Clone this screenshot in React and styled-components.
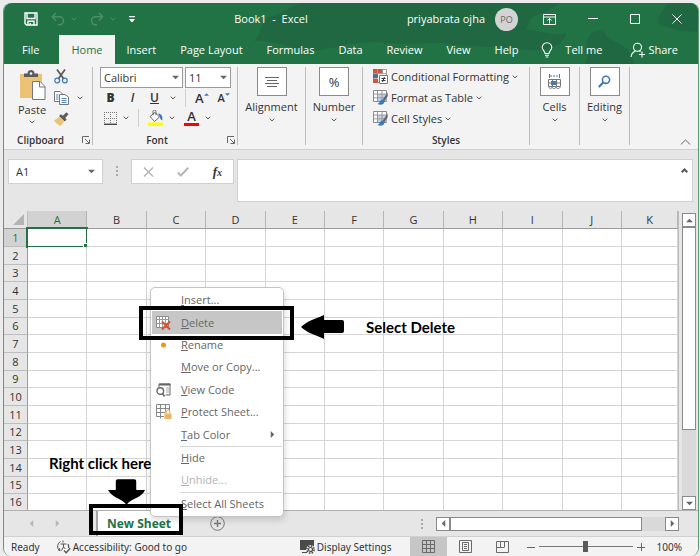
import React, { useState } from 'react';
import styled, { createGlobalStyle } from 'styled-components';

const Colours = {
  GREEN: '#217346',
  GREEN_DARK: '#1f6842',
  GREEN_FADED: '#4d8e69',
  TEXT: '#333333',
  MUTED: '#666666',
  RIBBON: '#f3f3f3',
  CHROME: '#e6e6e6',
  LINE: '#d4d4d4',
};

const COLUMNS = ['A', 'B', 'C', 'D', 'E', 'F', 'G', 'H', 'I', 'J', 'K'];
const ROWS = Array.from({ length: 16 }, (_, i) => i + 1);
const TABS = ['File', 'Home', 'Insert', 'Page Layout', 'Formulas', 'Data', 'Review', 'View', 'Help'];

const MENU = [
  { label: 'Insert...' },
  { label: 'Delete', icon: 'delete', highlighted: true },
  { label: 'Rename', icon: 'dot' },
  { label: 'Move or Copy...' },
  { label: 'View Code', icon: 'code' },
  { label: 'Protect Sheet...', icon: 'protect' },
  { label: 'Tab Color', submenu: true },
  { separator: true },
  { label: 'Hide' },
  { label: 'Unhide...', disabled: true },
  { separator: true },
  { label: 'Select All Sheets' },
];

/* ---------- icons ---------- */

const Chevron = ({ color = '#555' }) => (
  <svg width="6" height="4" viewBox="0 0 6 4" fill="none" stroke={color}>
    <path d="M.7.7 3 2.9 5.3.7" />
  </svg>
);

const Triangle = ({ dir = 'down', color = '#666' }) => {
  const shapes = {
    down: 'M0 2h8L4 6z',
    up: 'M0 6h8L4 2z',
    left: 'M6 0v8L2 4z',
    right: 'M2 0v8l4-4z',
  };
  return (
    <svg width="7" height="7" viewBox="0 0 8 8" fill={color}>
      <path d={shapes[dir]} />
    </svg>
  );
};

const SaveIcon = () => (
  <svg width="14" height="14" viewBox="0 0 14 14" fill="none" stroke="#fff" strokeWidth="1.4">
    <path d="M1 1h12v12H2.5L1 11.5zM3 1v5.5h8V1M4 13V9.3h6V13M6.3 13v-2" />
  </svg>
);

const UndoIcon = ({ flip }) => (
  <svg width="14" height="14" viewBox="0 0 14 14" fill="none" stroke={Colours.GREEN_FADED} strokeWidth="1.5">
    <g transform={flip ? 'matrix(-1 0 0 1 14 0)' : undefined}>
      <path d="M5 1 1.3 4.8 5 8.5M1.5 4.8h7a4 4 0 0 1 0 8H7" />
    </g>
  </svg>
);

const CustomiseIcon = () => (
  <svg width="6" height="7" viewBox="0 0 6 7" fill="#fff">
    <path d="M0 0h6v1.2H0zM0 3h6L3 6.4z" />
  </svg>
);

const RibbonDisplayIcon = () => (
  <svg width="13" height="11" viewBox="0 0 13 11" fill="none" stroke="#fff">
    <path d="M.5.5h12v10H.5zM.5 3h12M6.5 9.5V4.5M4.3 6.6l2.2-2.2 2.2 2.2" />
  </svg>
);

const BulbIcon = () => (
  <svg width="12" height="16" viewBox="0 0 12 16" fill="none" stroke="#fff" strokeWidth="1.1">
    <path d="M4 11.5C4 9 1.2 8.3 1.2 5.3a4.8 4.6 0 0 1 9.6 0C10.8 8.3 8 9 8 11.5zM4 13.3h4M4.7 15h2.6" />
  </svg>
);

const ShareIcon = () => (
  <svg width="16" height="16" viewBox="0 0 16 16" fill="none" stroke="#fff" strokeWidth="1.1">
    <circle cx="7.5" cy="5.3" r="4" />
    <path d="M1 15c.3-3 2-5 4.5-6M9.500 9l1 .8M12 9.500v6M9 12.500h6" />
  </svg>
);

const PasteIcon = () => (
  <svg width="27" height="30" viewBox="0 0 27 30">
    <path d="M1 4h22v24H1z" fill="#ecc275" />
    <path d="M5 7V3.5h3.5a3.5 3.5 0 0 1 7 0H19V7z" fill="#5c5c5c" />
    <circle cx="12" cy="3.5" r="1.3" fill="#f3f3f3" />
    <path d="M13.5 11.5h7.5l5 5v13H13.500z" fill="#fff" stroke="#777" />
    <path d="M20.5 11.5v5.5H26" fill="none" stroke="#777" />
  </svg>
);

const CutIcon = () => (
  <svg width="14" height="15" viewBox="0 0 14 15" fill="none">
    <path d="M3 .5 9.800 10M11 .5 4.200 10" stroke="#5c5c5c" strokeWidth="1.8" />
    <circle cx="3.2" cy="11.5" r="2.4" stroke="#3f78b5" strokeWidth="1.2" />
    <circle cx="10.8" cy="11.5" r="2.4" stroke="#3f78b5" strokeWidth="1.2" />
  </svg>
);

const CopyIcon = () => (
  <svg width="15" height="14" viewBox="0 0 15 14" fill="#fff" stroke="#777">
    <path d="M.5.5H6L8.500 3v7.500h-8z" />
    <path d="M5.500 3.500H11L14.500 6v7.500h-9z" />
    <path d="M2 4h2.500M2 6h2.500M2 8h2.500M7.500 7.500h5M7.500 9.500h5M7.500 11.500h5" stroke="#4d86bd" />
  </svg>
);

const PainterIcon = () => (
  <svg width="15" height="14" viewBox="0 0 15 14">
    <path d="M0 8.500 5.500 5l4.500 4.500L6.500 14C4.500 13 1.500 11 0 8.500z" fill="#ecc275" />
    <path d="m5 4 2-1.800 1.800 1.600L12.500.3l2 2-3.300 3.600 1.500 1.700-2 2z" fill="#5c5c5c" />
  </svg>
);

const BordersIcon = () => (
  <svg width="13" height="13" viewBox="0 0 13 13" fill="none" stroke="#777">
    <path d="M.5 0v12M6.500 0v12M12.500 0v12M0 .5h13M0 6.500h13" strokeDasharray="1 1" />
    <path d="M0 12.300h13" stroke="#444" strokeWidth="1.4" />
  </svg>
);

const FillIcon = () => (
  <svg width="15" height="16" viewBox="0 0 15 16">
    <path d="M2 6.500 7 2.500l4.500 4.500L6.500 11.500z" fill="#fff" stroke="#666" />
    <path d="M5 5V1.500a1.500 1.500 0 0 1 3 0V5" fill="none" stroke="#666" />
    <path d="M10 3.500c3 0 5 2 4.300 7-2.600-1-1.800-3.500-4.300-7z" fill="#3f78b5" />
    <path d="M0 12.500h15V16H0z" fill="#ff0" />
  </svg>
);

const LauncherIcon = () => (
  <svg width="8" height="8" viewBox="0 0 8 8" fill="none" stroke="#666">
    <path d="M.5 7V.5H7M3 3l4 4M7.500 3.500v4h-4" />
  </svg>
);

const AlignIcon = () => (
  <svg width="14" height="12" viewBox="0 0 14 12" stroke="#666">
    <path d="M0 1.500h14M2 4.500h10M0 7.500h14M2 10.500h10" />
  </svg>
);

const ConditionalIcon = () => (
  <svg width="15" height="15" viewBox="0 0 15 15">
    <path d="M.5.5h13v13H.5z" fill="#fff" stroke="#999" />
    <path d="M0 0h9v4.500H0zM0 9.500h5V14H0z" fill="#c75b3c" />
    <path d="M0 5h5v4H0z" fill="#4472a8" />
    <path d="M9.500 0v5M4.500 0v5M0 4.700h14" stroke="#999" fill="none" />
    <path d="M6.500 6.500h8v8h-8z" fill="#fff" stroke="#777" />
    <path d="M8.500 9.500h4M8.500 11.500h4M11.500 8l-2 5" stroke="#333" fill="none" />
  </svg>
);

const TableStyleIcon = () => (
  <svg width="15" height="15" viewBox="0 0 15 15">
    <path d="M.5.5h13v11H.5z" fill="#fff" stroke="#888" />
    <path d="M4.500 4h9v7h-9z" fill="#bdd3ea" />
    <path d="M4.500.5v11M9 .5v11M.5 4h13M.5 7.800h13" stroke="#999" fill="none" />
    <path d="M14.500 2.500 9.500 10l1.800 1.500 3.500-5.500z" fill="#666" />
    <path d="M9.500 9.500c-2.500 0-2.500 3.500-5 4.500 3 1.300 6.500.8 7-2.500z" fill="#3f78b5" />
  </svg>
);

const CellsIcon = () => (
  <svg width="15" height="16" viewBox="0 0 15 16" fill="none" stroke="#777">
    <path d="M2.500 0v4M12.500 0v4" stroke="#3f78b5" />
    <path d="M3 2h9" stroke="#3f78b5" strokeDasharray="2 1" />
    <path d="M1.500 5.500h12v7h-12zM5.500 5v8M9.500 5v8M1 9h13" />
    <path d="M4 7h5v4H4z" fill="#3f78b5" stroke="none" />
    <path d="M2 13c0 2 3 2 3 0 0 2 4 2 4 0 0 2 4 2 4 0" />
  </svg>
);

const SearchIcon = () => (
  <svg width="13" height="13" viewBox="0 0 13 13" fill="none" stroke="#3f78b5">
    <circle cx="8" cy="4.8" r="3.6" strokeWidth="1.6" />
    <path d="m5.200 7.500-4.400 4.500" strokeWidth="2.2" />
  </svg>
);

const CancelIcon = () => (
  <svg width="11" height="10" viewBox="0 0 11 10" stroke="#b5b5b5" strokeWidth="1.5">
    <path d="m1 .5 9 9M10 .5l-9 9" />
  </svg>
);

const TickIcon = () => (
  <svg width="12" height="10" viewBox="0 0 12 10" fill="none" stroke="#b5b5b5" strokeWidth="2">
    <path d="m.8 5.500 3 3L11.300.8" />
  </svg>
);

const menuIcons = {
  delete: (
    <svg width="15" height="14" viewBox="0 0 15 14" fill="none">
      <path d="M.5.5h12v11H.5z" fill="#fff" stroke="#888" />
      <path d="M3.500.5v11M6.500.5v11M9.500.5v11M.5 3.500h12M.5 7.500h12" stroke="#999" />
      <path d="m6 5.500 8 8M14 5.500l-8 8" stroke="#d0532f" strokeWidth="2" />
    </svg>
  ),
  dot: (
    <svg width="15" height="6" viewBox="0 0 15 6">
      <circle cx="7.500" cy="3" r="2.500" fill="#f0941f" />
    </svg>
  ),
  code: (
    <svg width="15" height="14" viewBox="0 0 15 14" fill="none" stroke="#666">
      <path d="M3 4V1h11v11H9.500" />
      <path d="M3 1.500h11.500" strokeWidth="2" />
      <path d="M10 5h3M10 7h3M10 9h3" stroke="#aaa" />
      <circle cx="4.300" cy="8" r="3.300" strokeWidth="1.400" />
      <path d="m6.500 10.500 2 3" strokeWidth="1.500" />
    </svg>
  ),
  protect: (
    <svg width="16" height="16" viewBox="0 0 16 16" fill="none">
      <path d="M8 12.500H.5V.5h13v6M4.500.5v14M9.500.5v7M.5 4.500h13M.5 8.500h9" stroke="#888" />
      <path d="M10.300 9.500V7.800a1.800 1.800 0 0 1 3.600 0v1.700" stroke="#e0a94d" />
      <path d="M8.500 9.500h7V15h-7z" fill="#e9b765" />
    </svg>
  ),
};

const AccessibilityIcon = () => (
  <svg width="15" height="14" viewBox="0 0 15 14" fill="none" stroke="#555">
    <path d="M4.500 1.500a5.500 5.500 0 0 0-1 9M2 9.500l2 1.500-.5-2.800" />
    <path d="M7 .5v2M4.500 4h6M7.500 4v3l-2 3.500M7.500 7l2 2" />
    <path d="M12 4a5.500 5.500 0 0 1 .5 4M8 10.500l2.200 2.200 4-4.500" strokeWidth="1.3" />
  </svg>
);

const DisplayIcon = () => (
  <svg width="15" height="14" viewBox="0 0 15 14">
    <path d="M0 0h14v6L8 9v1H0z" fill="#4a4a4a" />
    <path d="M2 12.500h5" stroke="#4a4a4a" />
    <circle cx="10.500" cy="9.500" r="4.400" fill="#f3f3f3" />
    <circle cx="10.500" cy="9.500" r="3.600" fill="none" stroke="#4a4a4a" strokeWidth="1.6" strokeDasharray="1.6 1.2" />
    <circle cx="10.500" cy="9.500" r="2" fill="none" stroke="#4a4a4a" strokeWidth="1.2" />
  </svg>
);

const NormalViewIcon = () => (
  <svg width="13" height="13" viewBox="0 0 13 13" fill="none" stroke="#6a6a6a">
    <path d="M.5.5h12v12H.5zM4.500.5v12M8.500.5v12M.5 4.500h12M.5 8.500h12" />
  </svg>
);

const LayoutViewIcon = () => (
  <svg width="13" height="13" viewBox="0 0 13 13" fill="none" stroke="#6a6a6a">
    <path d="M.5.5h12v12H.5zM3.500 2.500h6v8h-6zM5 4.500h3M5 6.500h3M5 8.500h3" />
  </svg>
);

const BreakViewIcon = () => (
  <svg width="13" height="12" viewBox="0 0 13 12" fill="none" stroke="#6a6a6a">
    <path d="M.5.5h12v11H.5zM4.500.5v5.500M8.500.5v5.500M.5 6.500h8" />
  </svg>
);

const AddSheetIcon = () => (
  <svg width="15" height="15" viewBox="0 0 15 15" fill="none" stroke="#777">
    <circle cx="7.500" cy="7.500" r="6.800" />
    <path d="M7.500 4v7M4 7.500h7" strokeWidth="1.4" />
  </svg>
);

/* ---------- pieces ---------- */

const LargeGroup = ({ label, icon, width }) => (
  <Group $width={width}>
    <LargeButton>
      <IconTile>{icon}</IconTile>
      {label}
      <Chevron />
    </LargeButton>
  </Group>
);

const SheetMenu = () => (
  <Menu role="menu">
    {MENU.map((item, i) =>
      item.separator ? (
        <MenuSeparator key={i} />
      ) : (
        <MenuItem key={item.label} role="menuitem" disabled={item.disabled} $highlighted={item.highlighted}>
          <MenuIcon>{menuIcons[item.icon]}</MenuIcon>
          <span>
            <u>{item.label[0]}</u>
            {item.label.slice(1)}
          </span>
          {item.submenu && <SubmenuArrow><Triangle dir="right" /></SubmenuArrow>}
        </MenuItem>
      )
    )}
  </Menu>
);

const App = () => {
  const [tab, setTab] = useState('Home');
  const [zoom, setZoom] = useState(50);

  return (
    <>
      <GlobalStyle />
      <Window>
        <Header>
          <HeaderArt viewBox="0 0 694 61" preserveAspectRatio="none" aria-hidden="true">
            <path d="M250 38c8-6 4-18 16-24 10-3 18-8 30-14h260c-20 14-30 10-32 22-2 14-30 20-60 18-30-1-50 2-80 0-40-4-60 10-84 8-20-6-30-10-50-10z" />
            <path d="M430 38c20-22 60-16 90-12 20 2 28 8 42 4-2 14-20 20-50 16-30-4-50 0-82-8zM585 34c4-10 16-8 18 0 10 8 22 6 28 27h-50c6-8-2-18 4-27zM655 20c10 6 26 10 39 8V0h-30c-4 8-12 12-9 20z" />
          </HeaderArt>
          <TitleBar>
            <QuickAccess>
              <PlainButton aria-label="Save"><SaveIcon /></PlainButton>
              <ArrowButton aria-label="Undo"><UndoIcon /><Chevron color={Colours.GREEN_FADED} /></ArrowButton>
              <ArrowButton aria-label="Redo"><UndoIcon flip /><Chevron color={Colours.GREEN_FADED} /></ArrowButton>
              <PlainButton aria-label="Customise"><CustomiseIcon /></PlainButton>
            </QuickAccess>
            <Title>Book1&nbsp; -&nbsp; Excel</Title>
            <User>priyabrata ojha <Avatar>PO</Avatar></User>
            <WindowButtons>
              <PlainButton aria-label="Ribbon display options"><RibbonDisplayIcon /></PlainButton>
              <PlainButton aria-label="Minimise">
                <svg width="10" height="10" stroke="#fff"><path d="M0 4.500h10" /></svg>
              </PlainButton>
              <PlainButton aria-label="Maximise">
                <svg width="10" height="10" fill="none" stroke="#fff"><path d="M.5.5h9v9h-9z" /></svg>
              </PlainButton>
              <PlainButton aria-label="Close">
                <svg width="10" height="10" stroke="#fff"><path d="m.5.5 9 9M9.500.5l-9 9" /></svg>
              </PlainButton>
            </WindowButtons>
          </TitleBar>
          <TabRow>
            {TABS.map((name) => (
              <Tab key={name} $active={name === tab} $wide={name === 'File'} onClick={() => setTab(name)}>
                {name}
              </Tab>
            ))}
            <TellMe><BulbIcon />Tell me</TellMe>
            <Share><ShareIcon />Share</Share>
          </TabRow>
        </Header>

        <Ribbon>
          <Group $width={88}>
            <ClipboardTools>
              <PasteButton><PasteIcon />Paste<Chevron /></PasteButton>
              <ToolColumn>
                <PlainButton aria-label="Cut"><CutIcon /></PlainButton>
                <PlainButton aria-label="Copy"><CopyIcon /><Chevron /></PlainButton>
                <PlainButton aria-label="Format Painter"><PainterIcon /></PlainButton>
              </ToolColumn>
            </ClipboardTools>
            <GroupLabel $launcher>Clipboard<Launcher aria-label="Clipboard settings"><LauncherIcon /></Launcher></GroupLabel>
          </Group>
          <Group $width={145}>
            <FontRow>
              <SelectWrap $width={83}>
                <Select aria-label="Font"><option>Calibri</option></Select>
                <Triangle />
              </SelectWrap>
              <SelectWrap $width={46}>
                <Select aria-label="Font size"><option>11</option></Select>
                <Triangle />
              </SelectWrap>
            </FontRow>
            <ToolRow>
              <Letter aria-label="Bold"><b>B</b></Letter>
              <Letter aria-label="Italic"><i>I</i></Letter>
              <Letter aria-label="Underline"><u>U</u></Letter>
              <PlainButton aria-label="Underline style"><Chevron /></PlainButton>
              <ToolDivider />
              <SizeButton aria-label="Increase font size">A<Triangle dir="up" color="#3f78b5" /></SizeButton>
              <SizeButton $small aria-label="Decrease font size">A<Triangle color="#3f78b5" /></SizeButton>
            </ToolRow>
            <ToolRow>
              <ArrowButton aria-label="Borders"><BordersIcon /><Chevron /></ArrowButton>
              <ToolDivider />
              <ArrowButton aria-label="Fill colour"><FillIcon /><Chevron /></ArrowButton>
              <ArrowButton aria-label="Font colour"><FontColour>A</FontColour><Chevron /></ArrowButton>
            </ToolRow>
            <GroupLabel $launcher>Font<Launcher aria-label="Font settings"><LauncherIcon /></Launcher></GroupLabel>
          </Group>
          <LargeGroup label="Alignment" icon={<AlignIcon />} width={68} />
          <LargeGroup label="Number" icon="%" width={57} />
          <Group $width={167}>
            <StyleList>
              <StyleButton><ConditionalIcon />Conditional Formatting<Chevron /></StyleButton>
              <StyleButton><TableStyleIcon />Format as Table<Chevron /></StyleButton>
              <StyleButton><TableStyleIcon />Cell Styles<Chevron /></StyleButton>
            </StyleList>
            <GroupLabel>Styles</GroupLabel>
          </Group>
          <LargeGroup label="Cells" icon={<CellsIcon />} width={50} />
          <LargeGroup label="Editing" icon={<SearchIcon />} width={50} />
          <Collapse aria-label="Collapse the ribbon">
            <svg width="11" height="6" fill="none" stroke="#666"><path d="m.8 5.500 4.700-4.500 4.700 4.500" /></svg>
          </Collapse>
        </Ribbon>

        <FormulaBar>
          <NameBox>
            <NameInput aria-label="Name box" defaultValue="A1" />
            <Triangle />
          </NameBox>
          <Grip />
          <FormulaButtons>
            <PlainButton aria-label="Cancel"><CancelIcon /></PlainButton>
            <PlainButton aria-label="Enter"><TickIcon /></PlainButton>
            <FxButton>f<sub>x</sub></FxButton>
          </FormulaButtons>
          <FormulaBox>
            <FormulaInput aria-label="Formula" />
            <svg width="7" height="5" fill="none" stroke="#555" strokeWidth="2"><path d="m.7 4.300 2.800-2.800 2.800 2.800" /></svg>
          </FormulaBox>
        </FormulaBar>

        <SheetArea>
          <Sheet>
            <colgroup>
              <col className="rowHead" />
              {COLUMNS.map((c) => <col key={c} className={c === 'K' ? 'clipped' : undefined} />)}
            </colgroup>
            <thead>
              <tr>
                <Corner aria-label="Select all">
                  <svg width="11" height="11" fill="#b4b4b4"><path d="M11 0v11H0z" /></svg>
                </Corner>
                {COLUMNS.map((c) => <ColHead key={c} $active={c === 'A'}>{c}</ColHead>)}
              </tr>
            </thead>
            <tbody>
              {ROWS.map((r) => (
                <tr key={r}>
                  <RowHead $active={r === 1}>{r}</RowHead>
                  {COLUMNS.map((c) => (
                    <Cell key={c}>{r === 1 && c === 'A' && <Selection />}</Cell>
                  ))}
                </tr>
              ))}
            </tbody>
          </Sheet>
          <VScroll>
            <ScrollButton aria-label="Scroll up"><Triangle dir="up" /></ScrollButton>
            <VThumb />
            <ScrollButton aria-label="Scroll down"><Triangle /></ScrollButton>
          </VScroll>
        </SheetArea>

        <SheetBar>
          <SheetNav>
            <PlainButton aria-label="Previous sheet"><Triangle dir="left" color="#b8b8b8" /></PlainButton>
            <PlainButton aria-label="Next sheet"><Triangle dir="right" color="#b8b8b8" /></PlainButton>
          </SheetNav>
          <SheetTab>New Sheet</SheetTab>
          <PlainButton aria-label="New sheet"><AddSheetIcon /></PlainButton>
          <Spacer />
          <Grip />
          <HScroll>
            <ScrollButton aria-label="Scroll left"><Triangle dir="left" /></ScrollButton>
            <HThumb />
            <ScrollButton aria-label="Scroll right"><Triangle dir="right" /></ScrollButton>
          </HScroll>
        </SheetBar>

        <StatusBar>
          <span>Ready</span>
          <StatusButton><AccessibilityIcon />Accessibility: Good to go</StatusButton>
          <Spacer />
          <StatusButton><DisplayIcon />Display Settings</StatusButton>
          <Views>
            <ViewButton $active aria-label="Normal"><NormalViewIcon /></ViewButton>
            <ViewButton aria-label="Page layout"><LayoutViewIcon /></ViewButton>
            <ViewButton aria-label="Page break preview"><BreakViewIcon /></ViewButton>
          </Views>
          <ZoomControl>
            <PlainButton aria-label="Zoom out">
              <svg width="8" height="8" stroke="#666"><path d="M0 4.500h8" /></svg>
            </PlainButton>
            <Slider type="range" aria-label="Zoom" value={zoom} onChange={(e) => setZoom(e.target.value)} />
            <PlainButton aria-label="Zoom in">
              <svg width="8" height="8" stroke="#666"><path d="M0 4.500h8M4.500 0v8" /></svg>
            </PlainButton>
          </ZoomControl>
          <span>100%</span>
        </StatusBar>

        <SheetMenu />

        <Frame $left={135} $top={303} $width={155} $height={34} />
        <Callout $left={297} $top={312}>
          <svg width="44" height="24" viewBox="0 0 44 24"><path d="M0 12c6-6 14-8 23-12v5h18q2 0 2 2v9q0 2-2 2H23v6c-8-4-17-6-23-12z" /></svg>
          Select Delete
        </Callout>
        <Callout $vertical $left={45} $top={452}>
          Right click here
          <svg width="37" height="26" viewBox="0 0 38 26"><path d="M8 2q0-2 2-2h17q2 0 2 2v9h9c-3 8-13 8-19 15C13 19 4 19 0 11h8z" /></svg>
        </Callout>
        <Frame $left={85} $top={501} $width={94} $height={31} />
      </Window>
    </>
  );
};

export default App;

/* ---------- styles ---------- */

const GlobalStyle = createGlobalStyle`
    * {
        box-sizing: border-box;
    }

    body {
        margin: 0;
        background: #ececec;
        color: ${Colours.TEXT};
        font: 11px/14px 'Open Sans', 'Noto Sans', sans-serif;
    }

    button, input, select, textarea {
        font: inherit;
        color: inherit;
        margin: 0;
    }

    svg {
        display: block;
        flex: none;
    }
`

const Window = styled.div`
    position: relative;
    display: flex;
    flex-direction: column;
    min-height: calc(100vh - 3px);
    margin: 3px 1px 0 3px;
    border: 1px solid #5b9a75;
    border-top: 0;
    border-bottom: 0;
    border-radius: 8px;
    background: ${Colours.CHROME};
`

const PlainButton = styled.button`
    display: flex;
    align-items: center;
    gap: 8px;
    padding: 0;
    border: 0;
    background: none;
`

const ArrowButton = styled(PlainButton)`
    gap: 6px;
`

const Header = styled.header`
    position: relative;
    background: ${Colours.GREEN};
    border-radius: 8px 8px 0 0;
    color: #fff;
    overflow: hidden;
`

const HeaderArt = styled.svg`
    position: absolute;
    inset: 0;
    width: 100%;
    height: 100%;
    fill: ${Colours.GREEN_DARK};
`

const TitleBar = styled.div`
    position: relative;
    display: flex;
    align-items: center;
    height: 32px;
`

const QuickAccess = styled.div`
    display: flex;
    align-items: center;
    gap: 13px;
    padding-left: 20px;
`

const Title = styled.h1`
    flex: 1;
    margin: 0;
    font-size: 11px;
    font-weight: 400;
    text-align: center;
`

const User = styled.div`
    display: flex;
    align-items: center;
    gap: 10px;
`

const Avatar = styled.span`
    width: 23px;
    height: 23px;
    border-radius: 50%;
    background: #d3d3d3;
    color: #666;
    font-size: 9px;
    line-height: 23px;
    text-align: center;
`

const WindowButtons = styled.div`
    display: flex;
    align-items: center;
    gap: 32px;
    padding: 0 16px 0 25px;
`

const TabRow = styled.nav`
    position: relative;
    display: flex;
    height: 29px;
`

const Tab = styled.button`
    padding: 0 12px 0 ${(p) => (p.$wide ? '18px' : '12px')};
    margin-right: ${(p) => (p.$wide ? '8px' : '0')};
    border: 0;
    background: ${(p) => (p.$active ? Colours.RIBBON : 'none')};
    color: ${(p) => (p.$active ? Colours.GREEN : '#fff')};
`

const TellMe = styled(PlainButton)`
    padding-left: 11px;
    gap: 12px;
    color: #fff;
`

const Share = styled(PlainButton)`
    gap: 2px;
    margin-left: auto;
    padding-right: 20px;
    color: #fff;
`

const Ribbon = styled.div`
    display: flex;
    height: 86px;
    padding: 3px 0 4px 1px;
    background: ${Colours.RIBBON};
    border-bottom: 1px solid #cfcfcf;
`

const Group = styled.section`
    display: flex;
    flex-direction: column;
    width: ${(p) => p.$width}px;
    border-right: 1px solid #bdbdbd;
`

const GroupLabel = styled.div`
    display: flex;
    align-items: center;
    justify-content: center;
    position: relative;
    margin-top: auto;
    padding-right: ${(p) => (p.$launcher ? '16px' : '0')};
    font-size: 10px;
    font-weight: 600;
    line-height: 10px;
`

const Launcher = styled.button`
    position: absolute;
    right: 2px;
    padding: 0;
    border: 0;
    background: none;
`

const ClipboardTools = styled.div`
    display: flex;
    gap: 8px;
    padding-left: 13px;
`

const PasteButton = styled(PlainButton)`
    flex-direction: column;
    gap: 3px;
    padding-top: 3px;
`

const ToolColumn = styled.div`
    display: flex;
    flex-direction: column;
    gap: 7px;
    padding-top: 2px;
`

const FontRow = styled.div`
    display: flex;
    gap: 2px;
    padding-left: 7px;
`

const SelectWrap = styled.label`
    display: flex;
    align-items: center;
    width: ${(p) => p.$width}px;
    height: 21px;
    padding: 0 3px;
    border: 1px solid #9a9a9a;
    background: #fff;
`

const Select = styled.select`
    flex: 1;
    min-width: 0;
    padding: 0;
    border: 0;
    appearance: none;
    background: none;
    outline: none;
`

const ToolRow = styled.div`
    display: flex;
    align-items: center;
    gap: 9px;
    height: 20px;
    padding-left: 11px;
`

const Letter = styled(PlainButton)`
    justify-content: center;
    width: 13px;
    font-size: 12px;
    font-weight: 600;
`

const ToolDivider = styled.span`
    width: 1px;
    height: 18px;
    background: #d0d0d0;
`

const SizeButton = styled(PlainButton)`
    align-items: flex-start;
    gap: 0;
    font-size: ${(p) => (p.$small ? '11px' : '13px')};
    font-weight: 600;

    svg {
        width: 5px;
    }
`

const FontColour = styled.span`
    width: 15px;
    border-bottom: 3px solid #f00;
    font-size: 13px;
    font-weight: 600;
    line-height: 13px;
    text-align: center;
`

const LargeButton = styled(PlainButton)`
    flex-direction: column;
    gap: 4px;
`

const IconTile = styled.span`
    display: flex;
    align-items: center;
    justify-content: center;
    width: 30px;
    height: 29px;
    border: 1px solid #8a8a8a;
    background: #fff;
    font-size: 13px;
`

const StyleList = styled.div`
    display: flex;
    flex-direction: column;
    gap: 6px;
    padding: 2px 0 0 10px;
`

const StyleButton = styled(PlainButton)`
    gap: 3px;
    white-space: nowrap;
`

const Collapse = styled(PlainButton)`
    align-self: flex-end;
    margin-left: auto;
    padding-right: 7px;
`

const FormulaBar = styled.div`
    display: flex;
    align-items: flex-start;
    padding: 9px 5px 9px 4px;
`

const NameBox = styled.div`
    display: flex;
    align-items: center;
    width: 95px;
    height: 25px;
    padding: 0 7px;
    border: 1px solid #d0d0d0;
    background: #fff;
`

const NameInput = styled.input`
    flex: 1;
    min-width: 0;
    padding: 0;
    border: 0;
    outline: none;
    background: none;
`

const Grip = styled.span`
    width: 2px;
    height: 10px;
    margin: 7px 13px;
    background: repeating-linear-gradient(#aaa 0 2px, transparent 2px 4px);
`

const FormulaButtons = styled.div`
    display: flex;
    align-items: center;
    justify-content: space-between;
    width: 103px;
    height: 25px;
    padding: 0 11px;
    border: 1px solid #d0d0d0;
    background: #fff;
`

const FxButton = styled.button`
    padding: 0;
    border: 0;
    background: none;
    font: italic bold 13px/14px 'Liberation Serif', serif;

    sub {
        font-size: 10px;
        line-height: 0;
        vertical-align: baseline;
    }
`

const FormulaBox = styled.div`
    display: flex;
    flex: 1;
    height: 43px;
    margin-left: 3px;
    padding: 8px 4px 0 4px;
    border: 1px solid #d0d0d0;
    background: #fff;
`

const FormulaInput = styled.textarea`
    flex: 1;
    height: 28px;
    padding: 0;
    border: 0;
    outline: none;
    resize: none;
    background: none;
`

const SheetArea = styled.div`
    display: flex;
    align-items: flex-start;
    border-bottom: 1px solid #b0b0b0;
`

const Sheet = styled.table`
    flex: 1;
    width: 100%;
    table-layout: fixed;
    border-collapse: separate;
    border-spacing: 0;
    border-right: 1px solid #bdbdbd;

    .rowHead {
        width: 24px;
    }

    .clipped {
        width: 56px;
    }

    th, td {
        height: 18px;
        padding: 0;
    }

    tbody tr:nth-child(3n) > * {
        height: 17px;
    }

    tbody tr:last-child > * {
        height: 16px;
        border-bottom: 0;
    }
`

const Corner = styled.th`
    border-right: 1px solid #c0c0c0;
    border-bottom: 1px solid #9a9a9a;

    svg {
        margin-left: 9px;
    }
`

const ColHead = styled.th`
    border-right: 1px solid #b5b5b5;
    border-bottom: 1px solid ${(p) => (p.$active ? Colours.GREEN : '#9a9a9a')};
    background: ${(p) => (p.$active ? '#d2d2d2' : Colours.CHROME)};
    color: ${(p) => (p.$active ? Colours.GREEN : Colours.TEXT)};
    font-weight: 400;
`

const RowHead = styled.th`
    border-right: 1px solid #9a9a9a;
    border-bottom: 1px solid #bdbdbd;
    background: ${(p) => (p.$active ? '#d2d2d2' : Colours.CHROME)};
    color: ${(p) => (p.$active ? Colours.GREEN : Colours.TEXT)};
    font-weight: 400;
    line-height: 14px;
`

const Cell = styled.td`
    position: relative;
    border-right: 1px solid ${Colours.LINE};
    border-bottom: 1px solid ${Colours.LINE};
    background: #fff;
`

const Selection = styled.div`
    position: absolute;
    inset: -2px;
    border: 2px solid ${Colours.GREEN};

    &::after {
        content: '';
        position: absolute;
        right: -3px;
        bottom: -3px;
        width: 5px;
        height: 5px;
        background: ${Colours.GREEN};
        outline: 1px solid #fff;
    }
`

const VScroll = styled.div`
    display: flex;
    flex-direction: column;
    align-self: stretch;
    width: 14px;
    margin: 2px 2px 0 3px;
    background: #d9d9d9;
`

const ScrollButton = styled.button`
    display: flex;
    align-items: center;
    justify-content: center;
    width: 14px;
    height: 14px;
    padding: 0;
    border: 1px solid #8a8a8a;
    background: #fff;
`

const VThumb = styled.div`
    flex: 0 1 203px;
    margin-bottom: auto;
    border: 1px solid #8a8a8a;
    background: #fff;
`

const SheetBar = styled.div`
    display: flex;
    align-items: center;
    height: 25px;
`

const SheetNav = styled.div`
    display: flex;
    gap: 19px;
    width: 92px;
    padding-left: 24px;
`

const SheetTab = styled.button`
    height: 25px;
    width: 84px;
    margin-right: 30px;
    padding: 0;
    border: 0;
    border-left: 2px solid #a8a8a8;
    background: #fff;
    color: ${Colours.GREEN};
    font-size: 12px;
    font-weight: 700;
`

const Spacer = styled.span`
    flex: 1;
`

const HScroll = styled.div`
    display: flex;
    width: 243px;
    margin-right: 19px;
    background: #d9d9d9;
`

const HThumb = styled.div`
    flex: 0 1 192px;
    margin-right: auto;
    border: 1px solid #8a8a8a;
    background: #fff;
`

const StatusBar = styled.footer`
    display: flex;
    flex: 1;
    align-items: center;
    min-height: 19px;
    padding: 0 16px 0 7px;
    border-top: 1px solid #d0d0d0;
    border-radius: 0 0 8px 8px;
    background: ${Colours.RIBBON};
    font-family: 'Noto Sans', sans-serif;
    font-size: 10px;
`

const StatusButton = styled(PlainButton)`
    gap: 2px;
    margin-left: 16px;
`

const Views = styled.div`
    display: flex;
    align-self: stretch;
    margin-left: 18px;
`

const ViewButton = styled.button`
    display: flex;
    align-items: center;
    justify-content: center;
    width: 37px;
    padding: 0;
    border: 0;
    background: ${(p) => (p.$active ? '#c6c6c6' : 'none')};
`

const ZoomControl = styled.div`
    display: flex;
    align-items: center;
    gap: 4px;
    margin: 0 12px 0 6px;
`

const Slider = styled.input`
    width: 94px;
    height: 12px;
    appearance: none;
    background: linear-gradient(#777, #777) center / 100% 1px no-repeat;

    &::-webkit-slider-thumb {
        appearance: none;
        width: 5px;
        height: 11px;
        background: #5a5a5a;
    }
`

const Menu = styled.div`
    position: absolute;
    left: 146px;
    top: 284px;
    display: flex;
    flex-direction: column;
    width: 134px;
    height: 230px;
    padding: 1px;
    border: 1px solid #c4c4c4;
    border-radius: 5px;
    background: #fff;
    box-shadow: 1px 3px 6px rgba(0, 0, 0, 0.15);
`

const MenuItem = styled.button`
    display: flex;
    flex: 1;
    align-items: center;
    padding: 0 6px 0 4px;
    border: 0;
    background: ${(p) => (p.$highlighted ? '#c6c6c6' : 'none')};
    color: ${(p) => (p.disabled ? '#b3b3b3' : Colours.MUTED)};
    text-align: left;
    white-space: nowrap;
`

const MenuIcon = styled.span`
    flex: none;
    width: 25px;
`

const SubmenuArrow = styled.span`
    margin-left: auto;
`

const MenuSeparator = styled.hr`
    width: 102px;
    height: 1px;
    margin: 0 0 0 auto;
    border: 0;
    background: #d6d6d6;
`

const Frame = styled.div`
    position: absolute;
    left: ${(p) => p.$left}px;
    top: ${(p) => p.$top}px;
    width: ${(p) => p.$width}px;
    height: ${(p) => p.$height}px;
    border: 4px solid #000;
    pointer-events: none;
`

const Callout = styled.div`
    position: absolute;
    left: ${(p) => p.$left}px;
    top: ${(p) => p.$top}px;
    display: flex;
    flex-direction: ${(p) => (p.$vertical ? 'column' : 'row')};
    align-items: ${(p) => (p.$vertical ? 'flex-end' : 'center')};
    gap: ${(p) => (p.$vertical ? '8px' : '21px')};
    color: #000;
    font-size: 15px;
    font-weight: 700;
    line-height: 16px;
    font-family: Lato, 'Open Sans', sans-serif;
    white-space: nowrap;

    svg {
        margin-right: ${(p) => (p.$vertical ? '6px' : '0')};
    }
`
